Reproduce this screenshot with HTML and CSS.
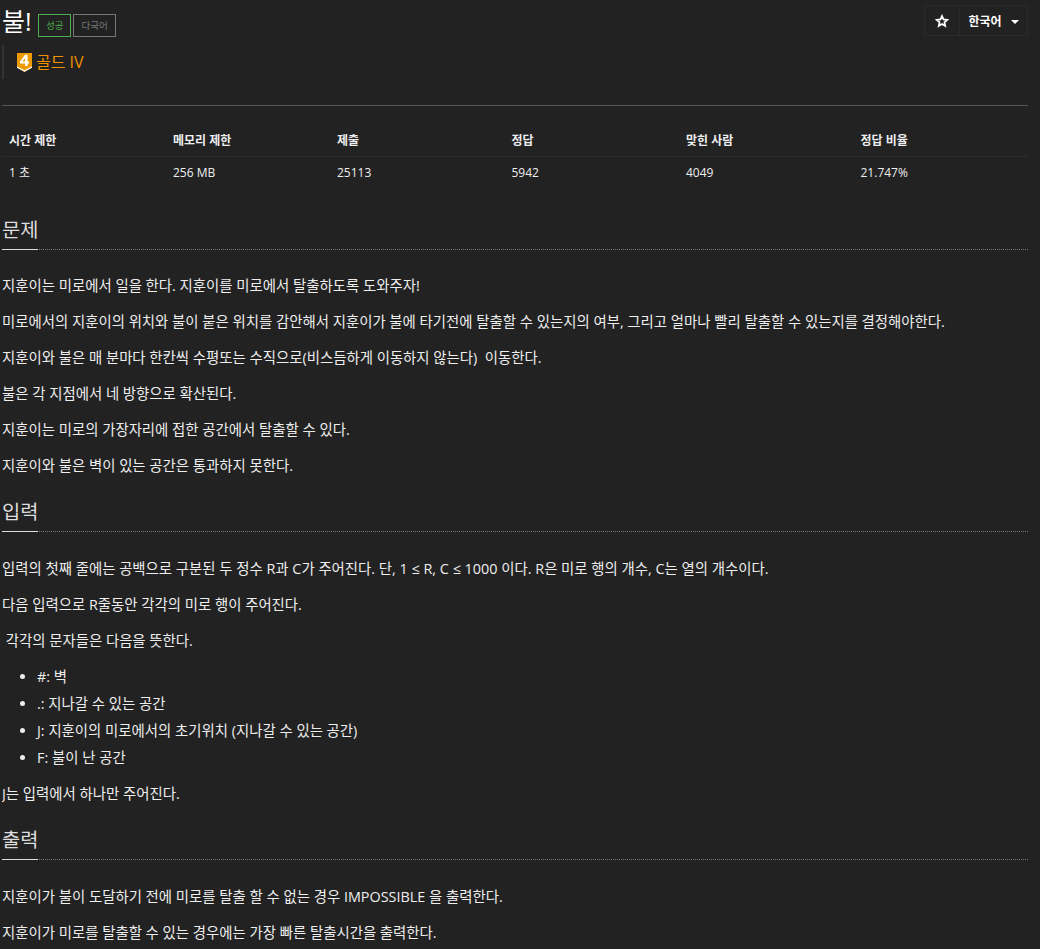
FILE: index.html
```html
<!DOCTYPE html>
<html lang="ko">
<head>
<meta charset="utf-8">
<title>불!</title>
<link rel="stylesheet" href="styles.css">
</head>
<body>
<main class="page">
  <header class="title-row">
    <div class="title-left">
      <h1 class="title">불!</h1>
      <span class="tag tag-success">성공</span>
      <span class="tag tag-multi">다국어</span>
    </div>
    <div class="actions">
      <button class="action action-star" type="button" aria-label="즐겨찾기">
        <svg width="14" height="14" viewBox="0 0 24 24"><path d="M12 3.500l2.600 5.800 6.300.7-4.700 4.200 1.300 6.300L12 17.300l-5.500 3.200 1.300-6.300L3.100 10l6.300-.7z" fill="none" stroke="#fff" stroke-width="3" stroke-linejoin="miter"/></svg>
      </button>
      <button class="action action-lang" type="button">한국어<span class="caret"></span></button>
    </div>
  </header>
  <blockquote class="tier">
    <svg class="tier-icon" width="15" height="20" viewBox="0 0 15 20"><path d="M0 0h15v14.500L7.500 19 0 14.500z" fill="#ec9a00"/><path d="M0 14l7.500 4 7.500-4" fill="none" stroke="#fff" stroke-width="1.200"/><path d="M8 1.800h2.600v6.700h1.500v2h-1.500v2.500H8v-2.500H3v-2zM8 5.200L5.300 8.500H8z" fill="#fff" fill-rule="evenodd"/></svg>
    <span class="tier-name">골드 IV</span>
  </blockquote>
  <hr class="rule">
  <table class="stats">
    <thead>
      <tr><th class="c1">시간 제한</th><th class="c2">메모리 제한</th><th class="c3">제출</th><th class="c3">정답</th><th class="c3">맞힌 사람</th><th>정답 비율</th></tr>
    </thead>
    <tbody>
      <tr><td>1 초</td><td>256 MB</td><td>25113</td><td>5942</td><td>4049</td><td>21.747%</td></tr>
    </tbody>
  </table>
  <section class="block">
    <h2 class="heading"><span>문제</span></h2>
    <p>지훈이는 미로에서 일을 한다. 지훈이를 미로에서 탈출하도록 도와주자!</p>
    <p>미로에서의 지훈이의 위치와 불이 붙은 위치를 감안해서 지훈이가 불에 타기전에 탈출할 수 있는지의 여부, 그리고 얼마나 빨리 탈출할 수 있는지를 결정해야한다.</p>
    <p>지훈이와 불은 매 분마다 한칸씩 수평또는 수직으로(비스듬하게 이동하지 않는다)&nbsp; 이동한다.</p>
    <p>불은 각 지점에서 네 방향으로 확산된다.</p>
    <p>지훈이는 미로의 가장자리에 접한 공간에서 탈출할 수 있다.</p>
    <p>지훈이와 불은 벽이 있는 공간은 통과하지 못한다.</p>
  </section>
  <section class="block">
    <h2 class="heading"><span>입력</span></h2>
    <p>입력의 첫째 줄에는 공백으로 구분된 두 정수 R과 C가 주어진다. 단, 1 ≤ R, C ≤ 1000 이다. R은 미로 행의 개수, C는 열의 개수이다.</p>
    <p>다음 입력으로 R줄동안 각각의 미로 행이 주어진다.</p>
    <p>&nbsp;각각의 문자들은 다음을 뜻한다.</p>
    <ul class="list">
      <li>#: 벽</li>
      <li>.: 지나갈 수 있는 공간</li>
      <li>J: 지훈이의 미로에서의 초기위치 (지나갈 수 있는 공간)</li>
      <li>F: 불이 난 공간</li>
    </ul>
    <p>J는 입력에서 하나만 주어진다.</p>
  </section>
  <section class="block">
    <h2 class="heading"><span>출력</span></h2>
    <p>지훈이가 불이 도달하기 전에 미로를 탈출 할 수 없는 경우 IMPOSSIBLE 을 출력한다.</p>
    <p>지훈이가 미로를 탈출할 수 있는 경우에는 가장 빠른 탈출시간을 출력한다.</p>
  </section>
</main>
</body>
</html>
```
FILE: styles.css
```css
* { box-sizing: border-box; }
html, body { margin: 0; background: #222; }
body {
  color: #eee;
  font-family: "Open Sans", "Noto Sans CJK KR", sans-serif;
  font-size: 14.4px;
  line-height: 20px;
}
.page { width: 1026px; margin-left: 2px; height: 949px; overflow: hidden; padding-top: 5px; }
.title-row { display: flex; justify-content: space-between; align-items: flex-start; height: 40px; }
.title-left { display: flex; align-items: flex-start; }
.title { width: 31px; margin: 0 5px 0 0; font-size: 25px; line-height: 32px; font-weight: 400; color: #fff; white-space: nowrap; }
.tag {
  margin-top: 9px; margin-right: 2px; height: 23px; padding: 0 7px;
  border: 1px solid; font-size: 9.500px; line-height: 21px; font-weight: 400;
}
.tag-success { border-color: #4cae4c; color: #4cae4c; }
.tag-multi { border-color: #777; color: #777; }
.actions { display: flex; border: 1px solid #2a2a2a; height: 31px; }
.action {
  background: #222; border: 0; color: #fff; font-family: inherit; font-size: 12px; font-weight: 700;
  height: 29px; padding: 0; display: flex; align-items: center; justify-content: center;
}
.action-star { width: 35px; border-right: 1px solid #2a2a2a; }
.action-lang { width: 67px; }
.caret {
  display: inline-block; margin-left: 9px; margin-top: 2px; width: 0; height: 0;
  border-left: 4px solid transparent; border-right: 4px solid transparent; border-top: 4px solid #fff;
}
.tier {
  margin: 0; height: 34px; border-left: 2px solid #333; padding-left: 13px;
  display: flex; align-items: center; gap: 4px;
}
.tier-icon { display: block; margin-top: 1px; }
.tier-name { color: #f29000; font-size: 16px; line-height: 22px; }
.rule { margin: 26px 0 0; height: 1px; border: 0; background: #555; }
.stats { width: 100%; border-collapse: collapse; margin-top: 18px; table-layout: fixed; font-size: 12px; }
.stats th { text-align: left; font-weight: 700; padding: 8px 7px 6px; height: 32px; line-height: 18px; border-bottom: 1px solid #2c2c2c; }
.stats td { padding: 7px; height: 32px; line-height: 18px; }
.c1, .c2 { width: 164px; }
.c3 { width: 174.500px; }
.block { margin-top: 26px; }
.block + .block { margin-top: 21px; }
.heading { margin: 0 0 26px; border-bottom: 1px dotted #777; font-size: 19.800px; font-weight: 400; line-height: 26px; color: #ddd; height: 35px; }
.block + .block .heading { margin-bottom: 27px; }
.heading span { display: inline-block; height: 35px; padding-top: 2px; border-bottom: 1px solid #ddd; }
p { margin: 0 0 16px; }
.list { margin: 0 0 16px; padding-left: 35px; list-style: disc; }
.list li { height: 27px; line-height: 20px; }
.list li:last-child { height: 20px; }
```
